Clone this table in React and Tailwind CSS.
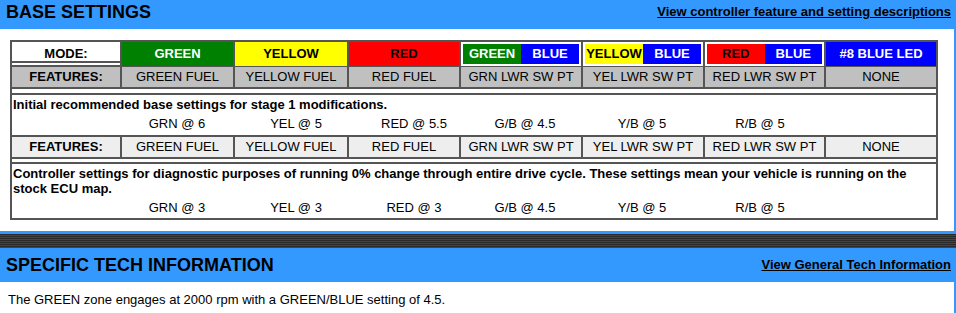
const cols = "grid grid-cols-[110px_113px_114px_112px_122px_122px_121px_110px]";
const valueCols = "grid grid-cols-[105px_118px_120px_116px_106px_128px_108px]";

const features = [
  "GREEN FUEL",
  "YELLOW FUEL",
  "RED FUEL",
  "GRN LWR SW PT",
  "YEL LWR SW PT",
  "RED LWR SW PT",
  "NONE",
];

const SplitCell = ({ left, leftClass }) => (
  <div className="flex p-[2px] bg-white border-r-2 border-[#555]">
    <div className={`flex-1 flex items-center justify-center font-bold ${leftClass}`}>
      {left}
    </div>
    <div className="flex-1 flex items-center justify-center font-bold bg-[#0000ff] text-white">
      BLUE
    </div>
  </div>
);

const FeatureRow = ({ bg }) => (
  <div className={`${cols} h-[22px] border-b-2 border-[#555] ${bg}`}>
    <div className="flex items-center justify-center font-bold border-r-2 border-[#555]">
      FEATURES:
    </div>
    {features.map((f, i) => (
      <div
        key={f}
        className={`flex items-center justify-center ${i < features.length - 1 ? "border-r-2 border-[#555]" : ""}`}
      >
        {f}
      </div>
    ))}
  </div>
);

const Values = ({ items }) => (
  <div className={`${valueCols} leading-[15px]`}>
    <div />
    {items.map((v) => (
      <div key={v} className="text-center">
        {v}
      </div>
    ))}
  </div>
);

export default function App() {
  return (
    <div className="min-h-screen bg-[#3399ff] font-['Liberation_Sans',Arial,sans-serif] text-[13px] text-black">
      {/* base settings header */}
      <div className="flex items-center justify-between h-[29px] pb-[5px] pl-[6px] pr-[5px]">
        <h1 className="text-[18px] font-bold">BASE SETTINGS</h1>
        <a href="#" className="font-bold underline">
          View controller feature and setting descriptions
        </a>
      </div>

      <div className="w-[954px] bg-white py-[11px] pl-[10px]">
        <div className="w-[928px] border-2 border-[#555]">
          {/* mode row */}
          <div className={`${cols} h-[21px] border-b-2 border-[#555]`}>
            <div className="flex items-center justify-center font-bold border-r-2 border-[#555]">
              MODE:
            </div>
            <div className="flex items-center justify-center font-bold bg-[#008000] text-white border-r-2 border-[#555]">
              GREEN
            </div>
            <div className="flex items-center justify-center font-bold bg-[#ffff00] border-r-2 border-[#555]">
              YELLOW
            </div>
            <div className="flex items-center justify-center font-bold bg-[#ff0000] border-r-2 border-[#555]">
              RED
            </div>
            <SplitCell left="GREEN" leftClass="bg-[#008000] text-white" />
            <SplitCell left="YELLOW" leftClass="bg-[#ffff00]" />
            <SplitCell left="RED" leftClass="bg-[#ff0000]" />
            <div className="flex items-center justify-center font-bold bg-[#0000ff] text-white">
              #8 BLUE LED
            </div>
          </div>
          <div className="h-[4px] border-b-2 border-[#555]" />

          <FeatureRow bg="bg-[#c0c0c0]" />
          <div className="h-[6px] border-b-2 border-[#555]" />

          <div className="h-[42px] border-b-2 border-[#555] pl-[1px] pt-[2px]">
            <p className="font-bold leading-[15px]">
              Initial recommended base settings for stage 1 modifications.
            </p>
            <div className="mt-[4px]">
              <Values items={["GRN @ 6", "YEL @ 5", "RED @ 5.5", "G/B @ 4.5", "Y/B @ 5", "R/B @ 5"]} />
            </div>
          </div>

          <FeatureRow bg="bg-[#eeeeee]" />
          <div className="h-[5px] border-b-2 border-[#555]" />

          <div className="h-[54px] pl-[1px] pt-[2px]">
            <p className="font-bold leading-[15px]">
              Controller settings for diagnostic purposes of running 0% change through entire drive
              cycle. These settings mean your vehicle is running on the stock ECU map.
            </p>
            <div className="mt-[4px]">
              <Values items={["GRN @ 3", "YEL @ 3", "RED @ 3", "G/B @ 4.5", "Y/B @ 5", "R/B @ 5"]} />
            </div>
          </div>
        </div>
      </div>

      <div className="h-[3px]" />
      <div className="h-[14px] bg-[repeating-linear-gradient(180deg,#2a2a2a_0px,#2a2a2a_1px,#454545_1px,#454545_2px)]" />

      {/* tech info header */}
      <div className="flex items-center justify-between h-[34px] pl-[6px] pr-[5px]">
        <h2 className="text-[18px] font-bold">SPECIFIC TECH INFORMATION</h2>
        <a href="#" className="font-bold underline">
          View General Tech Information
        </a>
      </div>

      <div className="w-[954px] h-[40px] bg-white pt-[10px] pl-[8px]">
        <p className="leading-[15px]">
          The GREEN zone engages at 2000 rpm with a GREEN/BLUE setting of 4.5.
        </p>
      </div>
    </div>
  );
}
